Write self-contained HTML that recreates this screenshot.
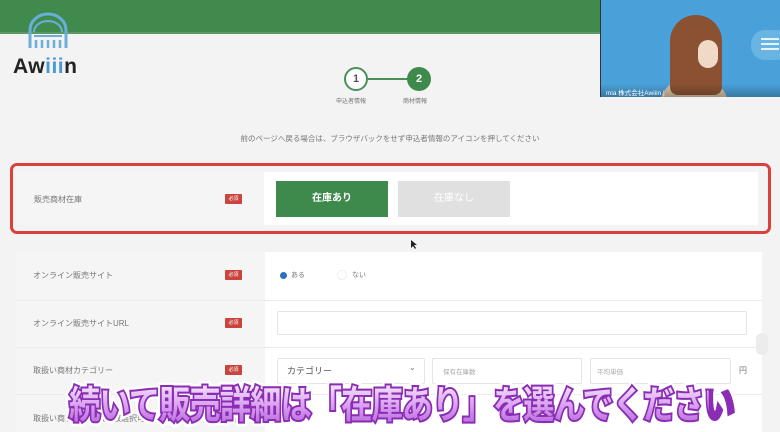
<!DOCTYPE html>
<html><head><meta charset="utf-8">
<style>
*{margin:0;padding:0;box-sizing:border-box}
body{width:780px;height:432px;overflow:hidden;background:#f3f3f3;font-family:"Liberation Sans","Noto Sans CJK JP",sans-serif;position:relative;color:#666}
.a{position:absolute}
.hdr{left:0;top:0;width:780px;height:34px;background:#3f8a4c;border-bottom:2px solid #5a9a62}
.cam{left:600px;top:0;width:180px;height:97px;background:#4aa0d9;overflow:hidden;border-left:1px solid #333}
.lbl{font-size:8px;color:#777}
.req{width:17px;height:10px;background:#c8443c;color:#fff;font-size:5px;text-align:center;line-height:10px;border-radius:1px}
.inp{background:#fff;border:1px solid #e4e4e4;border-radius:2px}
.sub{left:0;top:374px;width:780px;text-align:center;font-size:38px;font-weight:bold;letter-spacing:-1px;white-space:nowrap;font-family:"Liberation Sans","Noto Sans CJK JP",sans-serif;transform:scaleX(0.82);transform-origin:384px 0}
</style></head><body>
<div class="a hdr"></div>
<svg class="a" style="left:26px;top:12px" width="44" height="40" viewBox="0 0 44 40">
<path d="M4 36 V18 A18 16 0 0 1 40 18 V36" fill="none" stroke="#6aaedc" stroke-width="3"/>
<path d="M8 20 A14 11 0 0 1 36 20" fill="none" stroke="#6aaedc" stroke-width="2"/>
<path d="M8 24 H36" stroke="#6aaedc" stroke-width="2"/>
<path d="M10 36 V28 M16 36 V28 M22 36 V28 M28 36 V28 M34 36 V28" stroke="#6aaedc" stroke-width="2.5"/>
</svg>
<div class="a" style="left:13px;top:55px;font-size:21px;font-weight:bold;color:#222;letter-spacing:0.5px">Aw<span style="color:#4a9ad2">iii</span>n</div>
<div class="a" style="left:344px;top:67px;width:24px;height:24px;border:2px solid #4b8f58;border-radius:50%;background:#fff;text-align:center;line-height:20px;font-size:11px;font-weight:bold;color:#555">1</div>
<div class="a" style="left:368px;top:78px;width:40px;height:2px;background:#4b8f58"></div>
<div class="a" style="left:407px;top:67px;width:24px;height:24px;border-radius:50%;background:#3e8a4c;text-align:center;line-height:24px;font-size:11px;font-weight:bold;color:#fff">2</div>
<div class="a lbl" style="left:336px;top:96px;font-size:6px">申込者情報</div>
<div class="a lbl" style="left:403px;top:96px;font-size:6px">商材情報</div>
<div class="a lbl" style="left:0;top:133px;width:780px;text-align:center;font-size:7.5px">前のページへ戻る場合は、ブラウザバックをせず申込者情報のアイコンを押してください</div>
<div class="a" style="left:10px;top:163px;width:761px;height:71px;border:3px solid #d8423a;border-radius:7px"></div>
<div class="a" style="left:16px;top:172px;width:248px;height:53px;background:#f5f5f5"></div>
<div class="a" style="left:264px;top:172px;width:494px;height:53px;background:#fff"></div>
<div class="a lbl" style="left:34px;top:194px">販売商材在庫</div>
<div class="a req" style="left:225px;top:194px">必須</div>
<div class="a" style="left:276px;top:181px;width:112px;height:36px;background:#3e8a4c;color:#fff;font-size:10px;font-weight:bold;text-align:center;line-height:36px">在庫あり</div>
<div class="a" style="left:398px;top:181px;width:112px;height:36px;background:#e0e0e0;color:#fff;font-size:10px;text-align:center;line-height:36px">在庫なし</div>
<svg class="a" style="left:411px;top:240px" width="6" height="10"><path d="M0 0 L0 8 L2 6 L4 9 L5 8 L3 5 L6 5 Z" fill="#222"/></svg>
<div class="a" style="left:16px;top:252px;width:249px;height:180px;background:#f5f5f5"></div>
<div class="a" style="left:265px;top:252px;width:497px;height:180px;background:#fff"></div>
<div class="a" style="left:16px;top:300px;width:746px;height:1px;background:#ebebeb"></div>
<div class="a" style="left:16px;top:347px;width:746px;height:1px;background:#ebebeb"></div>
<div class="a" style="left:16px;top:394px;width:746px;height:1px;background:#ebebeb"></div>
<div class="a lbl" style="left:33px;top:270px">オンライン販売サイト</div>
<div class="a req" style="left:225px;top:270px">必須</div>
<div class="a" style="left:280px;top:272px;width:7px;height:7px;border-radius:50%;background:#2f6fc0"></div>
<div class="a lbl" style="left:291px;top:270px;font-size:7px">ある</div>
<div class="a" style="left:337px;top:270px;width:10px;height:10px;border-radius:50%;border:1px solid #eee"></div>
<div class="a lbl" style="left:352px;top:270px;font-size:7px">ない</div>
<div class="a lbl" style="left:33px;top:318px">オンライン販売サイトURL</div>
<div class="a req" style="left:225px;top:318px">必須</div>
<div class="a inp" style="left:277px;top:311px;width:470px;height:24px"></div>
<div class="a lbl" style="left:33px;top:365px">取扱い商材カテゴリー</div>
<div class="a req" style="left:225px;top:365px">必須</div>
<div class="a inp" style="left:277px;top:358px;width:148px;height:26px"></div>
<div class="a" style="left:287px;top:364px;font-size:9px;color:#555">カテゴリー</div>
<div class="a" style="left:409px;top:363px;font-size:8px;color:#777">⌄</div>
<div class="a inp" style="left:432px;top:358px;width:150px;height:26px"></div>
<div class="a lbl" style="left:443px;top:366px;font-size:6.5px;color:#aaa">保有在庫数</div>
<div class="a inp" style="left:590px;top:358px;width:141px;height:26px"></div>
<div class="a lbl" style="left:597px;top:366px;font-size:6.5px;color:#aaa">平均単価</div>
<div class="a lbl" style="left:739px;top:365px">円</div>
<div class="a lbl" style="left:33px;top:413px">取扱い商材タイプ（複数選択可）</div>
<div class="a req" style="left:225px;top:413px">必須</div>
<div class="a" style="left:756px;top:333px;width:12px;height:22px;border-radius:6px;background:#ececec"></div>
<div class="a cam">
 <div class="a" style="left:150px;top:30px;width:40px;height:30px;border-radius:14px;background:#68b5e4"></div>
 <div class="a" style="left:160px;top:38px;width:18px;height:2px;background:#e8f4fb;box-shadow:0 5px 0 #e8f4fb,0 10px 0 #e8f4fb"></div>
 <div class="a" style="left:58px;top:78px;width:70px;height:30px;border-radius:30px 30px 0 0;background:#d9c1a6"></div>
 <div class="a" style="left:69px;top:15px;width:52px;height:80px;border-radius:26px 26px 8px 8px;background:#8a5232"></div>
 <div class="a" style="left:97px;top:40px;width:20px;height:28px;border-radius:10px;background:#f1d9c7"></div>
 <div class="a" style="left:0;top:84px;width:180px;height:13px;background:linear-gradient(transparent,rgba(0,0,0,.25))"></div>
 <div class="a" style="left:5px;top:87px;font-size:6.5px;color:#fff">mia 株式会社Awiiin |</div>
</div>
<div class="a sub" style="color:#fff;-webkit-text-stroke:9px #fff;text-shadow:2px 3px 0 #7a4a8a,0 0 3px #fff">続いて販売詳細は「在庫あり」を選んでください</div>
<div class="a sub" style="color:#8a2cb4;-webkit-text-stroke:4px #8a2cb4">続いて販売詳細は「在庫あり」を選んでください</div>
<div class="a sub" style="background:linear-gradient(#f3e2fb 20%,#d79cef 60%,#b25fd8);-webkit-background-clip:text;background-clip:text;color:transparent">続いて販売詳細は「在庫あり」を選んでください</div>
</body></html>
